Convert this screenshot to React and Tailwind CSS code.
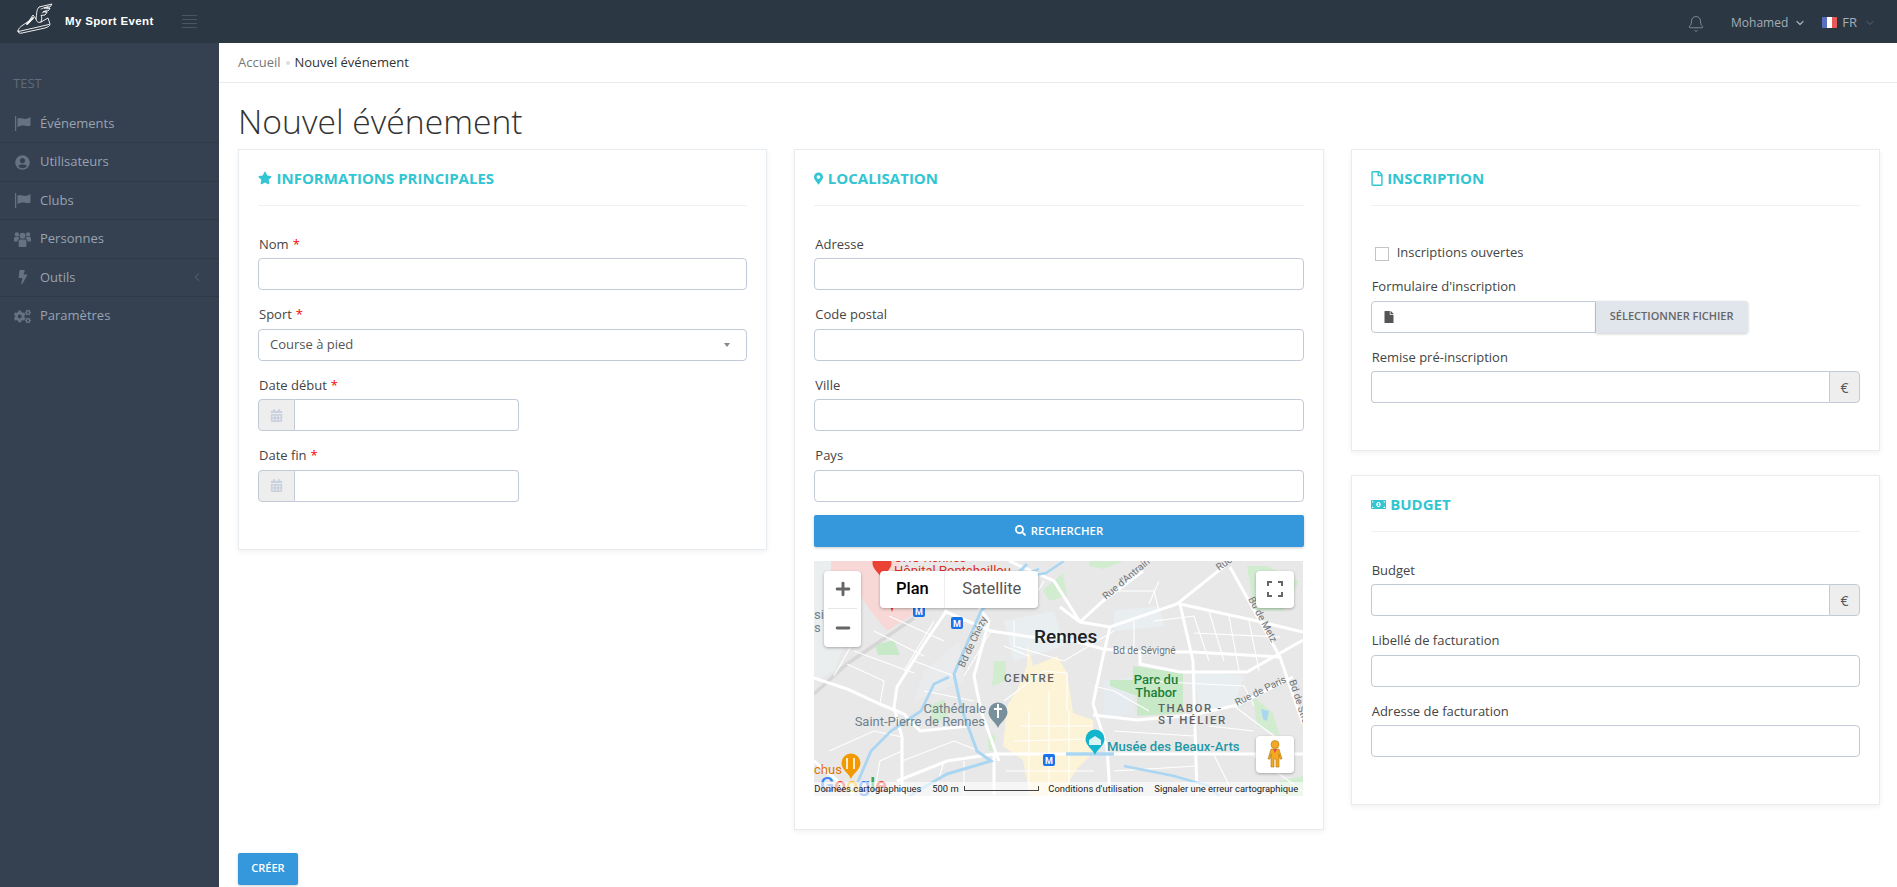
import { Bell, ChevronDown, ChevronLeft, Minus, Plus } from 'lucide-react'
import { FaBolt, FaCalendarAlt, FaCogs, FaFile, FaMapMarkerAlt, FaMoneyBillAlt, FaRegFile, FaSearch, FaStar, FaUserCircle } from 'react-icons/fa'

function FlagIcon() {
  return (
    <svg width="16" height="15" viewBox="0 0 16 15" fill="currentColor">
      <rect x="0" y="0" width="1.2" height="15" />
      <path d="M2.5 2.5C5 .8 8 3.4 11 2.8C13 2.4 14.5 1.6 15.5 1V9.5C13 11.2 9.5 9 6.5 9.6C4.8 10 3.6 10.6 2.5 11.2Z" />
    </svg>
  )
}

function GroupIcon() {
  return (
    <svg width="17" height="16" viewBox="0 0 17 16" fill="currentColor">
      <circle cx="8.5" cy="4.8" r="3" />
      <circle cx="2.9" cy="3.4" r="2.2" />
      <circle cx="14.1" cy="3.4" r="2.2" />
      <path d="M4.6 15V10.5C4.6 9 5.6 8.4 6.6 8.4H10.4C11.4 8.4 12.4 9 12.4 10.5V15C12.4 15.6 12 16 11.4 16H5.6C5 16 4.6 15.6 4.6 15Z" />
      <path d="M0 10.5V7.6C0 6.6.8 6 1.6 6H4.4C4.9 7 5.2 7.3 5.7 7.6C4.4 8 3.6 9 3.6 10.5Z" />
      <path d="M17 10.5V7.6C17 6.6 16.2 6 15.4 6H12.6C12.1 7 11.8 7.3 11.3 7.6C12.6 8 13.4 9 13.4 10.5Z" />
    </svg>
  )
}

const menu = [
  { label: 'Événements', icon: <FlagIcon /> },
  { label: 'Utilisateurs', icon: <FaUserCircle size={15} /> },
  { label: 'Clubs', icon: <FlagIcon /> },
  { label: 'Personnes', icon: <GroupIcon /> },
  { label: 'Outils', icon: <FaBolt size={14} />, arrow: true },
  { label: 'Paramètres', icon: <FaCogs size={17} /> },
]

const bigRoads = [
  '0,117 33,128 66,143 90,153 106,170 155,165',
  '133,49 110,83 83,126 80,146 88,176 88,234',
  '130,50 177,70 217,76 246,76 289,88 326,91 379,91 466,96',
  '83,220 133,200 180,193 489,193',
  '180,193 180,234',
  '246,46 266,61 296,66 363,43 413,3',
  '266,61 289,40 329,10',
  '296,66 288,100 279,143 293,186 296,234',
  '366,43 379,100 383,234',
  '366,43 443,60 489,71',
  '416,6 466,96 489,163',
  '326,93 326,103 366,111 433,111 489,79',
  '279,154 323,159 379,154 423,144 479,116',
  '0,200 40,234',
  '160,40 175,60 160,115 167,150 185,200',
  '195,0 240,20 266,61',
]

const smallRoads = [
  '33,103 70,120 66,143', '40,90 100,112', '60,70 110,95', '75,55 130,80', '90,110 120,60',
  '110,130 160,140', '100,100 140,115', '15,190 60,170 88,176', '88,200 140,180 165,190',
  '120,234 130,200', '150,234 150,200', '60,234 66,200 88,190', '177,70 150,115', '190,85 215,95',
  '200,60 200,85 250,100 300,70', '230,20 215,45', '300,30 340,30 345,50', '340,60 380,55 395,100',
  '395,50 410,100', '415,55 425,110', '435,60 445,110', '380,72 466,76', '330,120 430,125 440,145',
  '190,140 230,110 253,112 253,150', '205,165 279,165', '200,180 279,178', '215,150 215,234',
  '235,130 235,234', '255,150 255,234', '192,210 280,210', '300,170 380,175', '395,165 440,170',
  '300,210 383,205', '400,194 420,234', '440,195 489,230', '345,20 335,43', '20,40 40,80 20,115',
  '420,145 460,175', '280,125 300,130 335,150', '320,60 320,90',
]

function MetroMark({ x, y }) {
  return (
    <g>
      <rect x={x - 6} y={y - 6} width="12" height="12" rx="2" fill="#1a73e8" />
      <text x={x} y={y + 3.5} textAnchor="middle" fontSize="9" fontWeight="700" fill="#fff">M</text>
    </g>
  )
}

function Pin({ x, y, color, children }) {
  return (
    <g>
      <path d={`M${x} ${y + 15} C${x - 2} ${y + 9} ${x - 9.5} ${y + 6} ${x - 9.5} ${y - 1} A9.5 9.5 0 1 1 ${x + 9.5} ${y - 1} C${x + 9.5} ${y + 6} ${x + 2} ${y + 9} ${x} ${y + 15}Z`} fill={color} />
      {children}
    </g>
  )
}

function MapDrawing() {
  return (
    <svg viewBox="0 0 489 235" width="489" height="235" className="block" style={{ fontFamily: 'Roboto, sans-serif' }}>
      <rect width="489" height="235" fill="#e8e8e8" />
      <path d="M17 0H85V30L100 53L73 70L57 50L40 25L17 15Z" fill="#f8d8d6" />
      <path d="M0 0H17V40L40 60L20 110L0 120Z" fill="#ebeeef" />
      <path d="M100 140L150 120L145 80L110 110Z" fill="#e9ebed" />
      <path d="M300 50L345 45L350 65L300 70Z" fill="#e9eef1" />
      <path d="M190 60L240 50L250 85L200 100Z" fill="#e9eef1" />
      <path d="M290 120L320 115L320 150L290 160Z" fill="#e6ebef" />
      <path d="M380 110L430 115L420 145L385 150Z" fill="#e9eef1" />
      <path d="M213 82L219 105L243 95L253 112L259 152L279 159L279 192L263 208L256 219L249 235H216L209 199L189 185L193 145L203 129L213 105Z" fill="#fdf3d6" />
      <path d="M319 105L369 112V152L323 155V135L296 125V119L319 119Z" fill="#c8e9c8" />
      <path d="M61 84L80 79L86 94H64Z" fill="#c8e9c8" />
      <path d="M433 5H453L485 20L470 50H440Z" fill="#d2ecd0" />
      <path d="M439 135L459 152L466 175L443 165Z" fill="#d2ecd0" />
      <path d="M229 29L249 12L253 35L235 40Z" fill="#d2ecd0" />
      <path d="M275 0H310L290 8L275 5Z" fill="#d2ecd0" />
      <path d="M115 145L130 138L135 152L120 165Z" fill="#d2ecd0" />
      <path d="M180 100H192V120L178 125Z" fill="#d2ecd0" />
      <path d="M173 170L181 175V190L175 190Z" fill="#d2ecd0" />
      <path d="M465 220L489 215V235H465Z" fill="#d2ecd0" />
      <polyline points="0,133 33,103 100,57" fill="none" stroke="#d6d6d6" strokeWidth="3.5" />
      {smallRoads.map((p, i) => <polyline key={i} points={p} fill="none" stroke="#fff" strokeWidth="1.1" />)}
      {bigRoads.map((p, i) => <polyline key={i} points={p} fill="none" stroke="#fff" strokeWidth="3" />)}
      <polyline points="135,116 120,123 107,150 77,170 57,190 43,223" fill="none" stroke="#abd6f2" strokeWidth="2.8" />
      <polyline points="213,3 167,50 140,113 147,146 163,190 177,200 133,213 95,235" fill="none" stroke="#abd6f2" strokeWidth="3" />
      <polyline points="250,0 232,12 200,18 225,8" fill="none" stroke="#abd6f2" strokeWidth="2.5" />
      <polyline points="252,193 300,193" fill="none" stroke="#abd6f2" strokeWidth="3.5" />
      <polyline points="310,205 360,215 395,225 405,235" fill="none" stroke="#abd6f2" strokeWidth="2.5" />
      <path d="M447 148L455 150L453 160L449 158Z" fill="#abd6f2" />

      <text x="80" y="1" fontSize="13" fill="#d93025">CHU Rennes</text>
      <text x="80" y="14" fontSize="13" fill="#d93025">Hôpital Pontchaillou</text>
      <Pin x={68} y={3} color="#ea4335" />
      <path d="M76 45H80L78 51Z" fill="#ea4335" />
      <text x="0" y="58" fontSize="13" fill="#70818c">si</text>
      <text x="0" y="71" fontSize="13" fill="#70818c">s</text>
      <MetroMark x={105} y={50} />
      <MetroMark x={143} y={62} />
      <MetroMark x={235} y={199} />

      <text x="220" y="82" fontSize="19" fontWeight="500" fill="#202124">Rennes</text>
      <text x="190" y="121" fontSize="11.5" fontWeight="500" letterSpacing="1.4" fill="#5f6368">CENTRE</text>
      <text x="299" y="93" fontSize="10" fill="#70757a">Bd de Sévigné</text>
      <text x="342" y="123" fontSize="13" fontWeight="500" textAnchor="middle" fill="#188038">Parc du</text>
      <text x="342" y="136" fontSize="13" fontWeight="500" textAnchor="middle" fill="#188038">Thabor</text>
      <text x="344" y="151" fontSize="11.5" fontWeight="500" letterSpacing="1.6" fill="#5f6368">THABOR -</text>
      <text x="344" y="163" fontSize="11.5" fontWeight="500" letterSpacing="1.6" fill="#5f6368">ST HÉLIER</text>
      <text x="172" y="152" fontSize="13" textAnchor="end" fill="#70818c">Cathédrale</text>
      <text x="171" y="165" fontSize="13" textAnchor="end" fill="#70818c">Saint-Pierre de Rennes</text>
      <text x="293" y="190" fontSize="13.1" fontWeight="500" fill="#1e98a6">Musée des Beaux-Arts</text>
      <text x="0" y="213" fontSize="13" fill="#e37400">chus</text>
      <text x="292" y="39" fontSize="10" fill="#70757a" transform="rotate(-40 292 39)">Rue d'Antrain</text>
      <text x="405" y="10" fontSize="10" fill="#70757a" transform="rotate(-35 405 10)">Rue</text>
      <text x="150" y="107" fontSize="10" fill="#70757a" transform="rotate(-65 150 107)">Bd de Chézy</text>
      <text x="434" y="38" fontSize="10" fill="#70757a" transform="rotate(62 434 38)">Bd de Metz</text>
      <text x="423" y="145" fontSize="10" fill="#70757a" transform="rotate(-26 423 145)">Rue de Paris</text>
      <text x="475" y="120" fontSize="10" fill="#70757a" transform="rotate(72 475 120)">Bd de Strasbourg</text>

      <Pin x={184} y={152} color="#78909c">
        <path d="M183 143H185V147H188V149H185V157H183V149H180V147H183Z" fill="#fff" />
      </Pin>
      <Pin x={281} y={179} color="#12b5cb">
        <path d="M275 179L281 175L287 179V184H275Z" fill="#fff" opacity="0.85" />
      </Pin>
      <Pin x={37} y={203} color="#f29900">
        <path d="M33 197V208M40 197V208" stroke="#fff" strokeWidth="1.6" />
      </Pin>
      <text x="6" y="231" fontSize="21" fontWeight="500">
        <tspan fill="#4285f4">G</tspan>
        <tspan fill="#ea4335">o</tspan>
        <tspan fill="#fbbc04">o</tspan>
        <tspan fill="#4285f4">g</tspan>
        <tspan fill="#34a853">l</tspan>
        <tspan fill="#ea4335">e</tspan>
      </text>
    </svg>
  )
}

function MapBox() {
  return (
    <div className="relative h-[235px] overflow-hidden font-['Roboto',sans-serif]">
      <MapDrawing />
      <div className="absolute left-[10px] top-[10px] w-[37px] h-[76px] bg-white rounded-sm shadow-[0_1px_3px_rgba(0,0,0,0.3)] flex flex-col items-center">
        <div className="h-[37px] flex items-center justify-center text-[#666]"><Plus size={20} strokeWidth={3.5} /></div>
        <div className="w-[29px] h-px bg-[#e6e6e6]" />
        <div className="h-[38px] flex items-center justify-center text-[#666]"><Minus size={20} strokeWidth={3.5} /></div>
      </div>
      <div className="absolute left-[66px] top-[10px] h-[37px] flex bg-white rounded-sm shadow-[0_1px_3px_rgba(0,0,0,0.3)] text-[16.5px]">
        <div className="w-[65px] flex items-center justify-center text-black font-medium border-r border-[#eee]">Plan</div>
        <div className="w-[93px] flex items-center justify-center text-[#565656]">Satellite</div>
      </div>
      <div className="absolute left-[442px] top-[10px] w-[38px] h-[37px] bg-white rounded-sm shadow-[0_1px_3px_rgba(0,0,0,0.3)] flex items-center justify-center">
        <svg width="16" height="16" viewBox="0 0 16 16" fill="none" stroke="#666" strokeWidth="2">
          <path d="M1 5V1H5M11 1H15V5M15 11V15H11M5 15H1V11" />
        </svg>
      </div>
      <div className="absolute left-[442px] top-[175px] w-[38px] h-[37px] bg-white rounded-sm shadow-[0_1px_3px_rgba(0,0,0,0.3)] flex items-center justify-center">
        <svg width="16" height="28" viewBox="0 0 16 28">
          <circle cx="8" cy="4.5" r="4" fill="#f5a623" stroke="#b07a10" strokeWidth="0.6" />
          <path d="M4 9H12L15 19H13L12 14V27H9V19H7V27H4V14L3 19H1Z" fill="#f5a623" stroke="#b07a10" strokeWidth="0.6" />
          <path d="M6 9L8 13L10 9Z" fill="#d9534f" />
        </svg>
      </div>
      <div className="absolute left-0 right-0 bottom-0 h-[14px] flex items-center text-[9.4px] text-[#222] leading-none whitespace-nowrap">
        <span className="bg-white/60 w-[113px] h-full flex items-center">Données cartographiques</span>
        <span className="bg-white/60 w-[116px] pl-[5px] h-full flex items-center gap-[5px]">
          500 m
          <span className="w-[75px] h-[5px] border-l border-r border-b border-[#444]" />
        </span>
        <span className="bg-white/60 w-[106px] pl-[5px] h-full flex items-center">Conditions d'utilisation</span>
        <span className="bg-white/60 flex-1 pl-[5px] h-full flex items-center">Signaler une erreur cartographique</span>
      </div>
    </div>
  )
}

function Label({ children, required }) {
  return (
    <label className="block text-[13px] leading-[19.5px] pt-px pl-px mb-[4px] text-[#444]">
      {children}
      {required && <span className="text-[#f00] ml-[4px]">*</span>}
    </label>
  )
}

function Field({ label, required }) {
  return (
    <div className="mb-[14px]">
      <Label required={required}>{label}</Label>
      <input className="block w-full h-[32px] border border-[#c2cad8] rounded-[4px] bg-white outline-none" />
    </div>
  )
}

function DateField({ label }) {
  return (
    <div className="mb-[14px]">
      <Label required>{label}</Label>
      <div className="flex w-[261px] h-[32px]">
        <div className="w-[37px] flex items-center justify-center bg-[#eee] border border-[#c2cad8] rounded-l-[4px] text-[#c9d0de]">
          <FaCalendarAlt size={13} />
        </div>
        <input className="flex-1 min-w-0 border border-l-0 border-[#c2cad8] rounded-r-[4px] outline-none" />
      </div>
    </div>
  )
}

function EuroField({ label }) {
  return (
    <div className="mb-[14px]">
      <Label>{label}</Label>
      <div className="flex h-[32px]">
        <input className="flex-1 min-w-0 border border-r-0 border-[#c2cad8] rounded-l-[4px] outline-none" />
        <div className="w-[31px] flex items-center justify-center bg-[#eee] border border-[#c2cad8] rounded-r-[4px] text-[14px] text-[#555]">€</div>
      </div>
    </div>
  )
}

function Card({ icon: Icon, iconClass, title, children }) {
  return (
    <section className="bg-white border border-[#e7ecf1] shadow-[0_2px_5px_rgba(0,0,0,0.06)] px-[19px] pt-[18px] pb-[33px]">
      <h2 className="flex items-center gap-[4.5px] pb-[17px] border-b border-[#eef1f5] text-[15px] leading-[20px] font-bold uppercase text-[#32c5d2]">
        <Icon className={iconClass} />
        {title}
      </h2>
      <div className="mt-[27.5px]">{children}</div>
    </section>
  )
}

function Logo() {
  return (
    <svg width="37" height="32" viewBox="17 3 37 32" fill="none" stroke="#fff" strokeWidth="0.9" strokeLinecap="round" strokeLinejoin="round">
      <path d="M18 31C18 29 20 27 23 25L29 21L33 15L36 19C37 22 38 23 41 22L48 18L50 24C50 26 48 27 45 28L22 33C19 33.5 18 33 18 31Z" />
      <path d="M18.5 31.5L49 24.5" />
      <path d="M27 24L33 18" strokeWidth="1.8" />
      <path d="M36 19C37 14 36 10 39 7L52 4L50 7L44 8L50 8.5L48 11L43 11.5L47 12.5L45 15L41 15.5C42 17 42 19 41 22" />
      <path d="M41 9L49 6M42 13L47 10" strokeWidth="0.7" />
    </svg>
  )
}

function Hamburger() {
  return (
    <div className="w-[15px] flex flex-col gap-[2.8px]">
      <div className="h-px bg-[#4a5563]" />
      <div className="h-px bg-[#4a5563]" />
      <div className="h-px bg-[#4a5563]" />
      <div className="h-px bg-[#4a5563]" />
    </div>
  )
}

function TopBar() {
  return (
    <header className="h-[43px] shrink-0 bg-[#2c3744] flex items-center">
      <div className="ml-[17px] w-[37px] h-[32px] self-start mt-[3px]"><Logo /></div>
      <span className="ml-[11px] w-[87px] pt-px text-[11.5px] font-bold tracking-[0.35px] text-white font-['Liberation_Sans',sans-serif] whitespace-nowrap">My Sport Event</span>
      <div className="ml-[30px]"><Hamburger /></div>
      <div className="ml-auto pt-[2px] flex items-center text-[12px] text-[#a4adb9]">
        <Bell size={18} strokeWidth={1.1} className="text-[#8d97a5] mt-[2px]" />
        <span className="ml-[26px]">Mohamed</span>
        <ChevronDown size={12} strokeWidth={2.5} className="ml-[6px]" />
        <div className="ml-[16px] w-[15px] h-[11px] flex overflow-hidden rounded-[1px]">
          <span className="flex-1 bg-[#5a6fc0]" />
          <span className="flex-1 bg-white" />
          <span className="flex-1 bg-[#e85a5a]" />
        </div>
        <span className="ml-[5px] text-[13px]">FR</span>
        <ChevronDown size={12} strokeWidth={1.5} className="ml-[7px] mr-[21px] text-[#66717f]" />
      </div>
    </header>
  )
}

function Sidebar() {
  return (
    <aside className="w-[219px] shrink-0 bg-[#354150] text-[13px]">
      <div className="pt-[30px] pb-[12px] pl-[13px] leading-[20px] text-[#5f6b7a]">TEST</div>
      {menu.map((item) => (
        <div key={item.label} className="flex items-center h-[38.4px] border-b border-[#2f3a48] last:border-b-0 text-[#98a3b3]">
          <div className="w-[40px] pl-[14px] text-[#667282]">
            <div className="w-[17px] h-[17px] flex items-center justify-center">{item.icon}</div>
          </div>
          <span>{item.label}</span>
          {item.arrow && <ChevronLeft size={14} strokeWidth={1.5} className="ml-auto mr-[15px] text-[#5f6b7b]" />}
        </div>
      ))}
    </aside>
  )
}

export default function App() {
  return (
    <div className="h-screen overflow-hidden flex flex-col bg-white font-['Open_Sans',sans-serif]">
      <TopBar />
      <div className="flex flex-1 min-h-0">
        <Sidebar />
        <main className="flex-1 min-w-0">
          <div className="h-[40px] border-b border-[#e7ecf1] pl-[19px] flex items-center gap-[5px] text-[13px]">
            <span className="text-[#777]">Accueil</span>
            <span className="w-[4px] h-[4px] rounded-full bg-[#ddd]" />
            <span className="text-[#333]">Nouvel événement</span>
          </div>
          <div className="pl-[19px] pr-[17px]">
            <h1 className="h-[66px] flex items-center text-[33.7px] font-light text-[#333] pt-[10px]">Nouvel événement</h1>
            <div className="grid grid-cols-3 gap-x-[27px] items-start">
              <Card icon={FaStar} iconClass="w-[14px] h-[14px]" title="Informations principales">
                <Field label="Nom" required />
                <div className="mb-[14px]">
                  <Label required>Sport</Label>
                  <div className="h-[32px] border border-[#c2cad8] rounded-[4px] flex items-center pl-[11px] pr-[16px] text-[13px] text-[#555]">
                    Course à pied
                    <span className="ml-auto w-0 h-0 border-x-[3.5px] border-x-transparent border-t-[4px] border-t-[#888]" />
                  </div>
                </div>
                <DateField label="Date début" />
                <DateField label="Date fin" />
              </Card>
              <Card icon={FaMapMarkerAlt} iconClass="w-[9px] h-[13px]" title="Localisation">
                <Field label="Adresse" />
                <Field label="Code postal" />
                <Field label="Ville" />
                <Field label="Pays" />
                <button className="w-full h-[32px] -mt-px mb-[14px] bg-[#3598dc] rounded-[2px] shadow-[0_1px_3px_rgba(0,0,0,0.2)] flex items-center justify-center gap-[5px] text-white text-[11.4px] font-semibold uppercase">
                  <FaSearch size={11} />
                  Rechercher
                </button>
                <MapBox />
              </Card>
              <div className="flex flex-col gap-[24px]">
                <Card icon={FaRegFile} iconClass="w-[12px] h-[15px]" title="Inscription">
                  <div className="h-[28.5px] pt-[12px] mb-[14px] pl-[4px] flex items-center gap-[8px]">
                    <span className="w-[14px] h-[14px] border border-[#c4c4c4]" />
                    <span className="-mt-[2px] text-[13px] text-[#444]">Inscriptions ouvertes</span>
                  </div>
                  <div className="mb-[14px]">
                    <Label>Formulaire d'inscription</Label>
                    <div className="flex h-[32px]">
                      <div className="w-[225px] border border-[#c2cad8] rounded-l-[4px] pl-[11px] flex items-center text-[#555]">
                        <FaFile size={12} />
                      </div>
                      <button className="w-[152px] bg-[#e1e5ec] rounded-r-[3px] shadow-[0_1px_3px_rgba(0,0,0,0.2)] text-[11px] font-semibold uppercase text-[#666]">Sélectionner fichier</button>
                    </div>
                  </div>
                  <EuroField label="Remise pré-inscription" />
                </Card>
                <Card icon={FaMoneyBillAlt} iconClass="w-[15px] h-[13px]" title="Budget">
                  <EuroField label="Budget" />
                  <Field label="Libellé de facturation" />
                  <Field label="Adresse de facturation" />
                </Card>
              </div>
            </div>
            <button className="block mt-[23px] w-[60px] h-[32px] bg-[#3598dc] rounded-[2px] shadow-[0_1px_3px_rgba(0,0,0,0.2)] text-white text-[11px] font-semibold uppercase">Créer</button>
          </div>
        </main>
      </div>
    </div>
  )
}
